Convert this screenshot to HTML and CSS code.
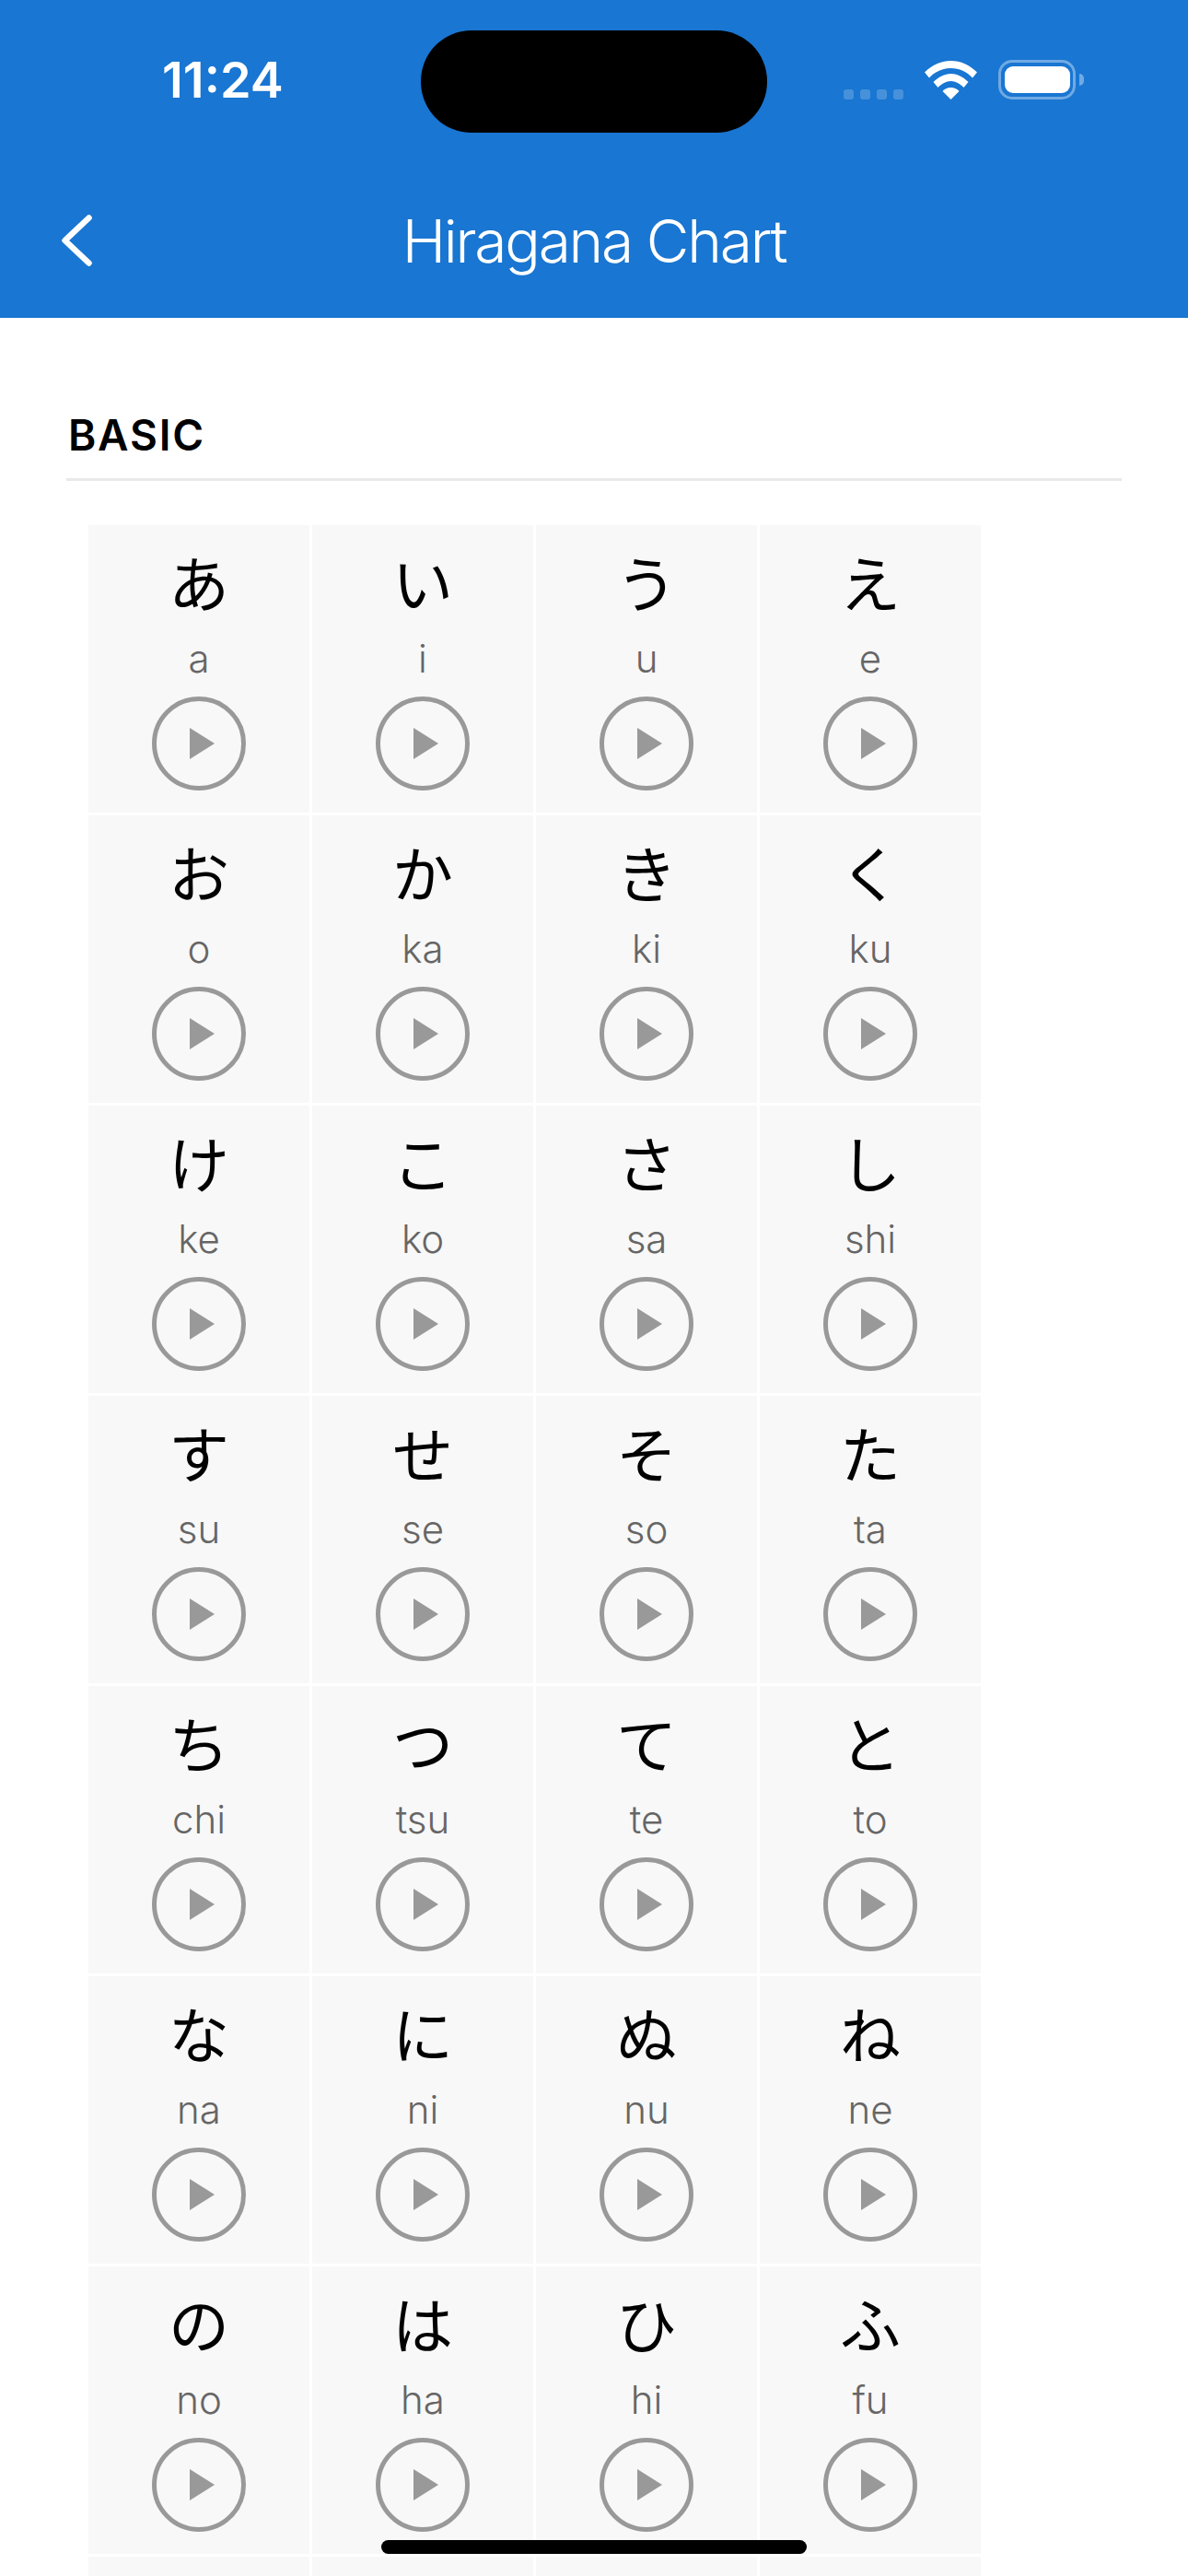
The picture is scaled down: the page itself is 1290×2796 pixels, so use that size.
FILE: index.html
```html
<!DOCTYPE html>
<html lang="en">

<head>
  <meta charset="UTF-8">
  <meta name="viewport" content="width=device-width, initial-scale=1.0">
  <title>Hiragana Chart</title>

  <link rel="stylesheet" href="styles.css">
</head>

<body>
  <header class="app-header">
    <div class="status-bar">
      <span class="status-time">11:24</span>
      <div class="island"></div>
      <div class="status-icons">
        <div class="signal"><i></i><i></i><i></i><i></i></div>
        <svg class="wifi" width="57" height="42" viewBox="0 0 57 42">
          <path d="M28.500 0C39 0 49 4.500 57 12.500L52 18.500C46 12 37.500 8 28.500 8C19.500 8 11 12 5 18.500L0 12.500C8 4.500 18 0 28.500 0Z" fill="#fff" />
          <path d="M28.500 14C34.500 14 41.500 17 47.500 23L42.500 29C38.500 25 33.500 22 28.500 22C23.500 22 18.500 25 14.500 29L9.500 23C15.500 17 22.500 14 28.500 14Z" fill="#fff" />
          <path d="M28.500 29C32 29 35 30.500 37.500 33L28.500 42L19.500 33C22 30.500 25 29 28.500 29Z" fill="#fff" />
        </svg>
        <div class="battery">
          <div class="battery-fill"></div>
        </div>
        <div class="battery-nub"></div>
      </div>
    </div>
    <nav class="nav-bar">
      <svg class="back" width="33" height="56" viewBox="0 0 33 56">
        <path d="M29.500 3.500L3.500 28L29.500 52.500" fill="none" stroke="#fff" stroke-width="6.500" stroke-linecap="round" stroke-linejoin="round" />
      </svg>
      <h1 class="nav-title">Hiragana Chart</h1>
    </nav>
  </header>

  <main class="content">
    <h2 class="section-title">BASIC</h2>
    <section class="kana-grid">
      <div class="kana-cell"><div class="kana">あ</div><div class="romaji">a</div><button class="play"></button></div>
      <div class="kana-cell"><div class="kana">い</div><div class="romaji">i</div><button class="play"></button></div>
      <div class="kana-cell"><div class="kana">う</div><div class="romaji">u</div><button class="play"></button></div>
      <div class="kana-cell"><div class="kana">え</div><div class="romaji">e</div><button class="play"></button></div>

      <div class="kana-cell"><div class="kana">お</div><div class="romaji">o</div><button class="play"></button></div>
      <div class="kana-cell"><div class="kana">か</div><div class="romaji">ka</div><button class="play"></button></div>
      <div class="kana-cell"><div class="kana">き</div><div class="romaji">ki</div><button class="play"></button></div>
      <div class="kana-cell"><div class="kana">く</div><div class="romaji">ku</div><button class="play"></button></div>

      <div class="kana-cell"><div class="kana">け</div><div class="romaji">ke</div><button class="play"></button></div>
      <div class="kana-cell"><div class="kana">こ</div><div class="romaji">ko</div><button class="play"></button></div>
      <div class="kana-cell"><div class="kana">さ</div><div class="romaji">sa</div><button class="play"></button></div>
      <div class="kana-cell"><div class="kana">し</div><div class="romaji">shi</div><button class="play"></button></div>

      <div class="kana-cell"><div class="kana">す</div><div class="romaji">su</div><button class="play"></button></div>
      <div class="kana-cell"><div class="kana">せ</div><div class="romaji">se</div><button class="play"></button></div>
      <div class="kana-cell"><div class="kana">そ</div><div class="romaji">so</div><button class="play"></button></div>
      <div class="kana-cell"><div class="kana">た</div><div class="romaji">ta</div><button class="play"></button></div>

      <div class="kana-cell"><div class="kana">ち</div><div class="romaji">chi</div><button class="play"></button></div>
      <div class="kana-cell"><div class="kana">つ</div><div class="romaji">tsu</div><button class="play"></button></div>
      <div class="kana-cell"><div class="kana">て</div><div class="romaji">te</div><button class="play"></button></div>
      <div class="kana-cell"><div class="kana">と</div><div class="romaji">to</div><button class="play"></button></div>

      <div class="kana-cell"><div class="kana">な</div><div class="romaji">na</div><button class="play"></button></div>
      <div class="kana-cell"><div class="kana">に</div><div class="romaji">ni</div><button class="play"></button></div>
      <div class="kana-cell"><div class="kana">ぬ</div><div class="romaji">nu</div><button class="play"></button></div>
      <div class="kana-cell"><div class="kana">ね</div><div class="romaji">ne</div><button class="play"></button></div>

      <div class="kana-cell"><div class="kana">の</div><div class="romaji">no</div><button class="play"></button></div>
      <div class="kana-cell"><div class="kana">は</div><div class="romaji">ha</div><button class="play"></button></div>
      <div class="kana-cell"><div class="kana">ひ</div><div class="romaji">hi</div><button class="play"></button></div>
      <div class="kana-cell"><div class="kana">ふ</div><div class="romaji">fu</div><button class="play"></button></div>

      <div class="kana-cell"></div>
      <div class="kana-cell"></div>
      <div class="kana-cell"></div>
      <div class="kana-cell"></div>
    </section>
  </main>

  <div class="home-indicator"></div>
</body>

</html>
```

FILE: styles.css
```css
* {
  box-sizing: border-box;
}

html,
body {
  height: 2796px;
  margin: 0;
  overflow: hidden;
}

body {
  background: #fff;
  font-family: Inter, "Noto Sans", sans-serif;
  position: relative;
}

.app-header {
  background: #1976d2;
  color: #fff;
  height: 345px;
}

.status-bar {
  align-items: flex-start;
  display: flex;
  height: 177px;
  padding: 33px 0 0 176px;
}

.status-time {
  font-size: 54px;
  font-weight: 600;
  line-height: 60px;
  margin-top: 24px;
  width: 281px;
}

.island {
  background: #000;
  border-radius: 55px;
  height: 111px;
  width: 376px;
}

.status-icons {
  align-items: flex-end;
  display: flex;
  height: 43px;
  margin: 32px 0 0 83px;
}

.signal {
  display: flex;
  gap: 7px;
  margin-right: 23px;
}

.signal i {
  background: rgba(255, 255, 255, .2);
  border-radius: 3px;
  display: block;
  height: 11px;
  width: 11px;
}

.wifi {
  margin-right: 23px;
}

.battery {
  align-items: center;
  border: 3px solid rgba(255, 255, 255, .38);
  border-radius: 15px;
  display: flex;
  height: 43px;
  justify-content: center;
  width: 84px;
}

.battery-fill {
  background: #fff;
  border-radius: 9px;
  height: 29px;
  width: 71px;
}

.battery-nub {
  align-self: center;
  background: rgba(255, 255, 255, .38);
  border-radius: 0 5px 5px 0;
  height: 13px;
  margin-left: 4px;
  width: 5px;
}

.nav-bar {
  align-items: center;
  display: grid;
  grid-template-columns: 1fr auto 1fr;
  height: 168px;
}

.back {
  margin-left: 67px;
}

.nav-title {
  font-size: 64px;
  font-weight: 300;
  letter-spacing: -2.200px;
  margin: 0;
}

.content {
  padding: 0 72px;
}

.section-title {
  border-bottom: 3px solid #e9e9e9;
  color: #000;
  font-size: 46px;
  font-weight: 600;
  letter-spacing: 1.800px;
  line-height: 56px;
  margin: 0;
  padding: 99px 0 19px 2px;
}

.kana-grid {
  display: grid;
  gap: 3px;
  grid-auto-rows: 312px;
  grid-template-columns: repeat(4, 240px);
  margin: 48px 0 0 24px;
}

.kana-cell {
  align-items: center;
  background: #f8f8f8;
  display: flex;
  flex-direction: column;
  padding-top: 22px;
}

.kana {
  color: #000;
  font-family: "Noto Sans CJK JP", sans-serif;
  font-size: 66px;
  font-weight: 400;
  line-height: 76px;
}

.romaji {
  color: #666;
  font-size: 42px;
  font-weight: 300;
  line-height: 50px;
  margin-top: 22px;
}

.play {
  background: none;
  border: 5px solid #999;
  border-radius: 50%;
  display: block;
  flex: none;
  height: 102px;
  margin-top: 16px;
  padding: 0;
  position: relative;
  width: 102px;
}

.play::before {
  background: #999;
  clip-path: polygon(0 0, 100% 50%, 0 100%);
  content: "";
  height: 34px;
  left: 36px;
  position: absolute;
  top: 29px;
  width: 27px;
}

.home-indicator {
  background: #000;
  border-radius: 8px;
  height: 15px;
  left: 414px;
  position: absolute;
  top: 2757px;
  width: 462px;
}
```
